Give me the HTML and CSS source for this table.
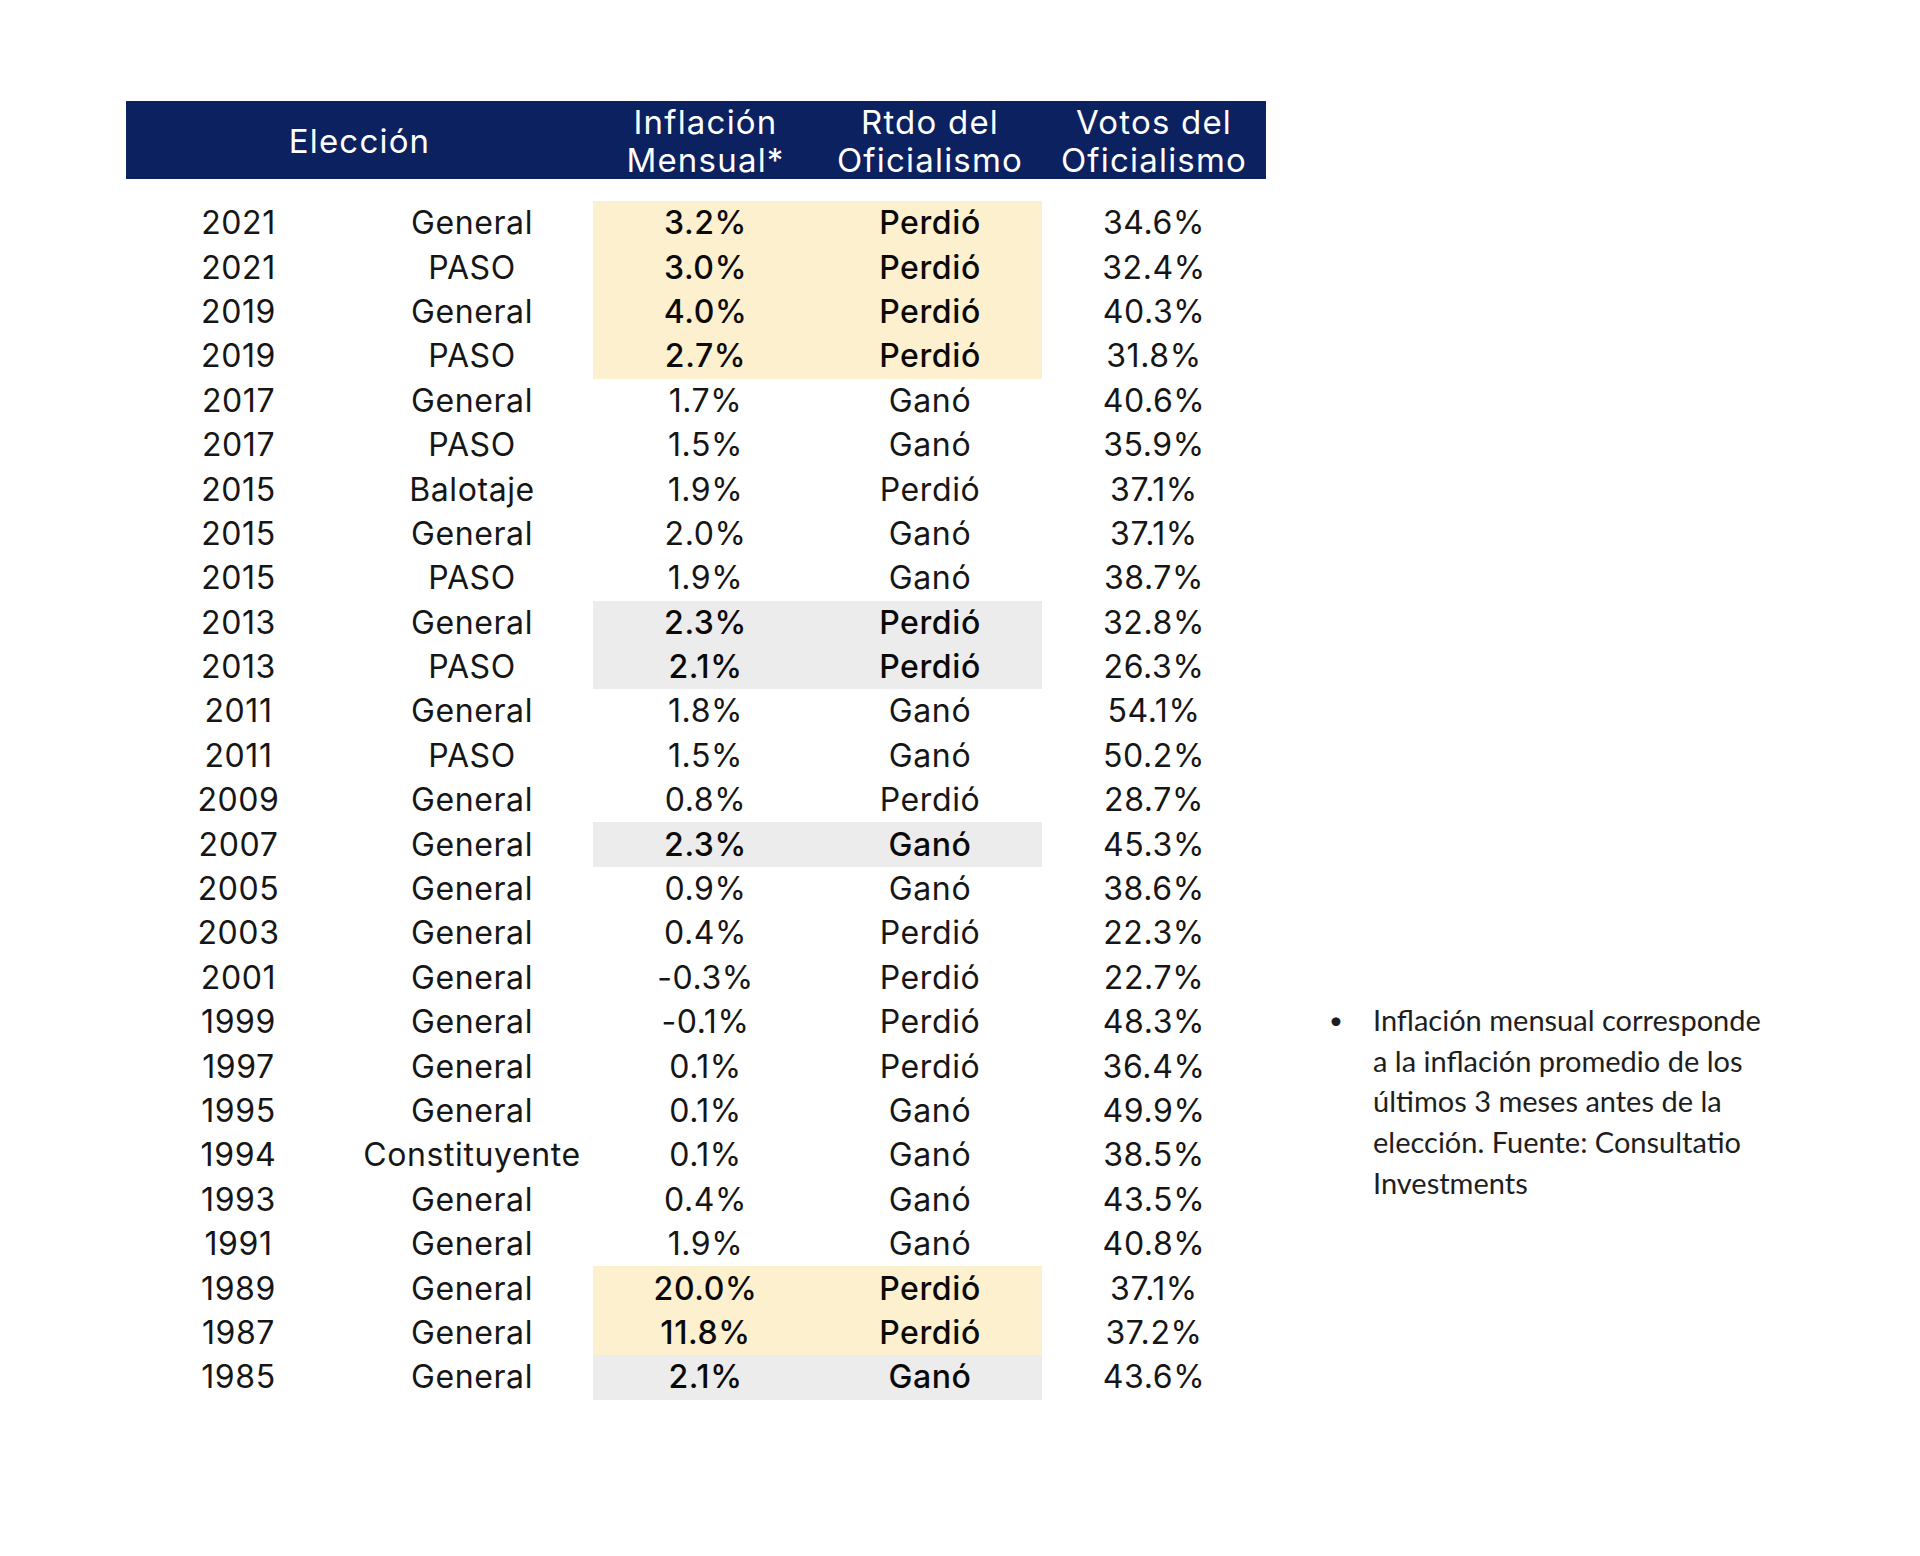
FILE: index.html
```html
<!DOCTYPE html>
<html lang="es">
<head>
<meta charset="utf-8">
<title>Inflación y elecciones</title>
<link rel="stylesheet" href="styles.css">
</head>
<body>
<div class="page">
  <table class="data">
    <colgroup>
      <col class="c-year"><col class="c-type"><col class="c-inf"><col class="c-rtdo"><col class="c-votos">
    </colgroup>
    <thead>
      <tr>
        <th colspan="2">Elección</th>
        <th>Inflación<br>Mensual*</th>
        <th>Rtdo del<br>Oficialismo</th>
        <th>Votos del<br>Oficialismo</th>
      </tr>
    </thead>
    <tbody>
      <tr class="spacer"><td colspan="5"></td></tr>
      <tr><td>2021</td><td>General</td><td class="hy b">3.2%</td><td class="hy b">Perdió</td><td>34.6%</td></tr>
      <tr><td>2021</td><td>PASO</td><td class="hy b">3.0%</td><td class="hy b">Perdió</td><td>32.4%</td></tr>
      <tr><td>2019</td><td>General</td><td class="hy b">4.0%</td><td class="hy b">Perdió</td><td>40.3%</td></tr>
      <tr><td>2019</td><td>PASO</td><td class="hy b">2.7%</td><td class="hy b">Perdió</td><td>31.8%</td></tr>
      <tr><td>2017</td><td>General</td><td>1.7%</td><td>Ganó</td><td>40.6%</td></tr>
      <tr><td>2017</td><td>PASO</td><td>1.5%</td><td>Ganó</td><td>35.9%</td></tr>
      <tr><td>2015</td><td>Balotaje</td><td>1.9%</td><td>Perdió</td><td>37.1%</td></tr>
      <tr><td>2015</td><td>General</td><td>2.0%</td><td>Ganó</td><td>37.1%</td></tr>
      <tr><td>2015</td><td>PASO</td><td>1.9%</td><td>Ganó</td><td>38.7%</td></tr>
      <tr><td>2013</td><td>General</td><td class="hg b">2.3%</td><td class="hg b">Perdió</td><td>32.8%</td></tr>
      <tr><td>2013</td><td>PASO</td><td class="hg b">2.1%</td><td class="hg b">Perdió</td><td>26.3%</td></tr>
      <tr><td>2011</td><td>General</td><td>1.8%</td><td>Ganó</td><td>54.1%</td></tr>
      <tr><td>2011</td><td>PASO</td><td>1.5%</td><td>Ganó</td><td>50.2%</td></tr>
      <tr><td>2009</td><td>General</td><td>0.8%</td><td>Perdió</td><td>28.7%</td></tr>
      <tr><td>2007</td><td>General</td><td class="hg b">2.3%</td><td class="hg b">Ganó</td><td>45.3%</td></tr>
      <tr><td>2005</td><td>General</td><td>0.9%</td><td>Ganó</td><td>38.6%</td></tr>
      <tr><td>2003</td><td>General</td><td>0.4%</td><td>Perdió</td><td>22.3%</td></tr>
      <tr><td>2001</td><td>General</td><td>-0.3%</td><td>Perdió</td><td>22.7%</td></tr>
      <tr><td>1999</td><td>General</td><td>-0.1%</td><td>Perdió</td><td>48.3%</td></tr>
      <tr><td>1997</td><td>General</td><td>0.1%</td><td>Perdió</td><td>36.4%</td></tr>
      <tr><td>1995</td><td>General</td><td>0.1%</td><td>Ganó</td><td>49.9%</td></tr>
      <tr><td>1994</td><td>Constituyente</td><td>0.1%</td><td>Ganó</td><td>38.5%</td></tr>
      <tr><td>1993</td><td>General</td><td>0.4%</td><td>Ganó</td><td>43.5%</td></tr>
      <tr><td>1991</td><td>General</td><td>1.9%</td><td>Ganó</td><td>40.8%</td></tr>
      <tr><td>1989</td><td>General</td><td class="hy b">20.0%</td><td class="hy b">Perdió</td><td>37.1%</td></tr>
      <tr><td>1987</td><td>General</td><td class="hy b">11.8%</td><td class="hy b">Perdió</td><td>37.2%</td></tr>
      <tr><td>1985</td><td>General</td><td class="hg b">2.1%</td><td class="hg b">Ganó</td><td>43.6%</td></tr>
    </tbody>
  </table>
  <ul class="note">
    <li>Inflación mensual corresponde<br>a la inflación promedio de los<br>últimos 3 meses antes de la<br>elección. Fuente: Consultatio<br>Investments</li>
  </ul>
</div>
</body>
</html>
```

FILE: styles.css
```css
html, body {
  margin: 0;
  padding: 0;
  background: #ffffff;
}

.page {
  width: 1920px;
  height: 1556px;
  box-sizing: border-box;
  padding: 101px 0 0 126px;
  display: flex;
  align-items: flex-start;
}

.data {
  border-collapse: collapse;
  table-layout: fixed;
  width: 1140px;
  font-family: "Inter", "Noto Sans", sans-serif;
  font-size: 32px;
  letter-spacing: 0.6px;
  color: #161616;
}

.c-year { width: 225px; }
.c-type { width: 242px; }
.c-inf { width: 225px; }
.c-rtdo { width: 224px; }
.c-votos { width: 224px; }

.data th {
  background: #0c2160;
  color: #ffffff;
  font-weight: 400;
  font-size: 33px;
  letter-spacing: 1.2px;
  line-height: 38px;
  height: 76px;
  padding: 2px 0 0;
  text-align: center;
  vertical-align: middle;
}

.data .spacer td {
  height: 22px;
  padding: 0;
}

.data td {
  height: 44.4px;
  padding: 0;
  text-align: center;
  vertical-align: middle;
  white-space: nowrap;
  line-height: 44px;
}

.data td.hy { background: #fdf0cf; }
.data td.hg { background: #ececec; }
.data td.b { font-weight: 500; color: #0a0a0a; }

.note {
  list-style: none;
  margin: 899px 0 0 61px;
  padding: 0;
  font-family: "Lato", "Liberation Sans", sans-serif;
  font-size: 29px;
  line-height: 40.7px;
  color: #1e1e1e;
}

.note li {
  position: relative;
  padding-left: 46px;
}

.note li::before {
  content: "\2022";
  position: absolute;
  left: 2px;
  top: 0;
  font-size: 24px;
}
```
